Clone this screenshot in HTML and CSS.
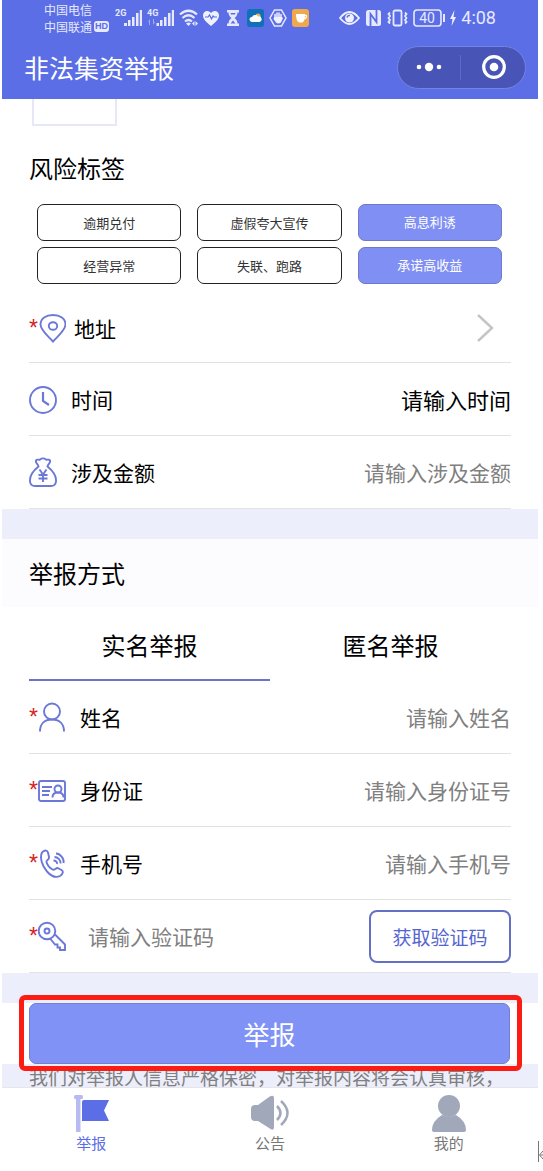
FILE: index.html
```html
<!DOCTYPE html>
<html lang="zh-CN">
<head>
<meta charset="utf-8">
<meta name="viewport" content="width=device-width, initial-scale=1">
<title>非法集资举报</title>
<link rel="stylesheet" href="styles.css">
</head>
<body>
<div class="app">
  <header class="header">
    <div class="status">
      <div class="carriers">
        <div>中国电信</div>
        <div class="carrier-hd">中国联通<span class="hd">HD</span></div>
      </div>
      <div class="status-icons">
        <svg width="27" height="20" viewBox="0 0 27 20" fill="#e6e9ff"><text class="net" x="0" y="8">2G</text><path d="M9 15h3v3H9zM13 12h2.500v6H13zM17 9h2.500v9H17zM21 5h2.500v13H21zM24.800 2H27v16h-2.200z"/></svg>
        <svg width="27" height="20" viewBox="0 0 27 20" fill="#e6e9ff"><text class="net" x="0" y="8">4G</text><path d="M9.500 15h2.500v3H9.500zM13 12h2.500v6H13zM17 9h2.500v9H17zM21 5h2.500v13H21zM24.800 2H27v16h-2.200z"/><path opacity=".5" d="M3 11l-2 3h1v3h1zM6 17l2-3H7v-3H6z"/></svg>
        <svg width="19" height="20" viewBox="0 0 19 20" fill="none" stroke="#e6e9ff" stroke-width="2.200"><path d="M1 6.500Q9.500-1 18 6.500M3.500 10Q9.500 4.500 15.500 10M6 13.500q3.500-3 7 0"/><path fill="#e6e9ff" stroke="none" d="M7 15.500q2.500-2 5 0L9.500 18zM15.500 13v5L13 15.500zM16.500 13l2.500 2.500-2.500 2.500z"/></svg>
        <svg width="16" height="20" viewBox="0 0 16 20"><path fill="#f0f1ff" d="M8 18C4 14.500 0 11.500 0 7.500 0 2.500 5.500 1.500 8 5c2.500-3.500 8-2.500 8 2.500 0 4-4 7-8 10.500z"/><path d="M2 9h3l1.500-2 2 4L10 8l1 1h3" fill="none" stroke="#5b6ee6" stroke-width="1.200"/></svg>
        <svg width="18" height="20" viewBox="0 0 18 20" fill="#e6e9ff"><path d="M3 2h12v2.500H3zM3 15.500h12V18H3zM4.500 4h9q0 4-3 6 3 2 3 6h-9q0-4 3-6-3-2-3-6z"/><path fill="#5b6ee6" d="M6.500 5h5l-.500 1.500H7zM9 12.500l2.500 3h-5z"/></svg>
        <svg width="17" height="20" viewBox="0 0 17 20"><rect y="1" width="17" height="18" rx="3" fill="#1070b8"/><circle cx="11" cy="8" r="2.500" fill="#e8b860"/><path fill="#fff" d="M5 14a2.500 2.500 0 0 1 0-5 3.500 3.500 0 0 1 6-.500A2.800 2.800 0 0 1 12.500 14z"/></svg>
        <svg width="18" height="20" viewBox="0 0 18 20"><path d="M5.500 2h7L17 10l-4.500 8h-7L1 10z" fill="none" stroke="#e6e9ff" stroke-width="1.500"/><path d="M6 11V6.500M8 10V5M10 10V5M12 11V6.500" stroke="#f0f1ff" stroke-width="1.500" stroke-linecap="round"/><path fill="#f0f1ff" d="M5.300 9h7.500l1.200 1-2 4.500q-3 2-5 0L4.500 11z"/></svg>
        <svg width="17" height="20" viewBox="0 0 17 20"><rect y="1" width="17" height="18" rx="3" fill="#eda94c"/><path fill="#fff" d="M4 6h9q0 8-3 8.500H7Q4 13 4 6z"/><path d="M12 7.500q3-.500 2.500 1.500T11.500 11" fill="none" stroke="#fff" stroke-width="1.200"/></svg>
      </div>
      <div class="status-icons status-right">
        <svg width="21" height="20" viewBox="0 0 21 20"><path d="M1 10q9.500-12 19 0-9.500 12-19 0z" fill="none" stroke="#f0f1ff" stroke-width="1.800"/><circle cx="10.500" cy="10" r="4.500" fill="#f0f1ff"/><path d="M8 9.500Q8.500 7 11 7.500" fill="none" stroke="#5b6ee6" stroke-width="1.500"/></svg>
        <svg width="17" height="20" viewBox="0 0 17 20"><rect x="1" y="2" width="15" height="16" rx="2.500" fill="#e6e9ff"/><path d="M5.500 18V6l6 8V2" fill="none" stroke="#5b6ee6" stroke-width="1.800"/></svg>
        <svg width="21" height="20" viewBox="0 0 21 20" fill="none" stroke="#e6e9ff" stroke-width="1.800"><rect x="6.500" y="2.500" width="8" height="15" rx="1.500"/><path d="M3 4.500L1.500 6 3 8 1.500 10 3 12l-1.500 2L3 15.500M18 4.500L19.500 6 18 8l1.500 2-1.500 2 1.500 2-1.500 1.500"/></svg>
        <svg width="32" height="20" viewBox="0 0 32 20"><rect x="1" y="2" width="27" height="16" rx="3" fill="none" stroke="#e6e9ff" stroke-width="1.600"/><path d="M31 6v8" stroke="#e6e9ff" stroke-width="2"/><text class="charge" x="14" y="15" text-anchor="middle" fill="#e6e9ff">40</text></svg>
        <svg width="6" height="20" viewBox="0 0 6 20"><path fill="#f0f1ff" d="M4.500 2L0 11h2.500L1.500 18 6 9H3.500z"/></svg>
        <span class="clock">4:08</span>
      </div>
    </div>
    <div class="titlebar">
      <h1 class="title">非法集资举报</h1>
      <div class="capsule">
        <button class="capsule-btn" type="button" aria-label="更多"><svg width="28" height="24" viewBox="0 0 28 24" fill="#fff"><circle cx="4" cy="12" r="2.300"/><circle cx="14" cy="12" r="4.200"/><circle cx="24" cy="12" r="2.300"/></svg></button>
        <button class="capsule-btn" type="button" aria-label="关闭"><svg width="24" height="24" viewBox="0 0 24 24"><circle cx="12" cy="12" r="10.300" fill="none" stroke="#fff" stroke-width="3.200"/><circle cx="12" cy="12" r="4.300" fill="#fff"/></svg></button>
      </div>
    </div>
  </header>

  <main>
    <div class="upload-slot"></div>
    <h2 class="heading">风险标签</h2>
    <div class="tags">
      <button class="tag" type="button" aria-pressed="false">逾期兑付</button>
      <button class="tag" type="button" aria-pressed="false">虚假夸大宣传</button>
      <button class="tag tag-on" type="button" aria-pressed="true">高息利诱</button>
      <button class="tag" type="button" aria-pressed="false">经营异常</button>
      <button class="tag" type="button" aria-pressed="false">失联、跑路</button>
      <button class="tag tag-on" type="button" aria-pressed="true">承诺高收益</button>
    </div>

    <div class="rows">
      <div class="row row-address">
        <span class="star">*</span>
        <svg class="icon" viewBox="0 0 28 28"><path d="M15 27.500C9 21 2.500 16 2.500 10.500 2.500 4.500 8 1 15 1s12.500 3.500 12.500 9.500C27.500 16 21 21 15 27.500z"/><ellipse cx="15" cy="12" rx="4.200" ry="3.800"/></svg>
        <label class="label label-near" for="address">地址</label>
        <button class="picker" id="address" type="button"><svg width="18" height="30" viewBox="0 0 18 30"><path d="M2 2l14 13L2 28" fill="none" stroke="#c4c4c4" stroke-width="2.400"/></svg></button>
      </div>
      <div class="row">
        <svg class="icon" viewBox="0 0 28 28"><circle cx="14" cy="15" r="13"/><path stroke-width="2.200" d="M14 7v9l6 4"/></svg>
        <label class="label" for="time">时间</label>
        <input class="field field-dark" id="time" type="text" placeholder="请输入时间">
      </div>
      <div class="row">
        <svg class="icon" viewBox="0 0 28 30"><path d="M9.500 9.500C9 6.500 6 6 7 3.500 8 1.500 10 3.500 11 2.500c2-1.500 4-1.500 6 0 1 1 3-1 4 1 1 2.500-2 3-2.500 6 5 4 9 9.500 8.500 15q-.500 4.500-5 4.500H6q-4.500 0-5-4.500c-.500-5.500 3.500-11 8.500-15z"/><path d="M10.500 12.500l3.500 5 3.500-5M9.500 18h9M9.500 21.500h9M14 17.500V25"/></svg>
        <label class="label" for="amount">涉及金额</label>
        <input class="field" id="amount" type="text" placeholder="请输入涉及金额">
      </div>
    </div>

    <div class="band"></div>
    <h2 class="heading heading-tinted">举报方式</h2>
    <div class="tabs" role="tablist">
      <button class="tab tab-on" type="button" role="tab" aria-selected="true">实名举报</button>
      <button class="tab" type="button" role="tab" aria-selected="false">匿名举报</button>
    </div>

    <div class="rows">
      <div class="row">
        <span class="star">*</span>
        <svg class="icon" viewBox="0 0 28 28"><circle cx="14" cy="8.500" r="8"/><path d="M2 28.500c0-8 5-12 12-12s12 4 12 12"/></svg>
        <label class="label" for="name">姓名</label>
        <input class="field" id="name" type="text" placeholder="请输入姓名">
      </div>
      <div class="row">
        <span class="star">*</span>
        <svg class="icon" viewBox="0 0 28 28"><rect x="1" y="5" width="26" height="20" rx="2"/><path d="M4 11h10M4 15h8M4 19h7"/><circle cx="20" cy="13" r="3.500"/><path d="M14.500 21.500q0-5 5.500-5t5.500 5"/></svg>
        <label class="label" for="idcard">身份证</label>
        <input class="field" id="idcard" type="text" placeholder="请输入身份证号">
      </div>
      <div class="row">
        <span class="star">*</span>
        <svg class="icon" viewBox="0 0 28 28"><path d="M4 3.500c2-2.500 5-3 6 0l1 4.500c.500 3-3 3-2.500 5 1 3.500 3.500 6 6 7.500 2 1 3-1.500 5-1.500l4 2c2.500 1.500 1 4.500-1.500 6-4 2-9 0-13-4.500-5-5.500-7.500-14-5-19z"/><path d="M18 4.500c4 0 8.500 5 7.500 9.500M16.500 8c3 0 6.500 3 6 6.500M15.500 11.500c2 0 4 1.500 3.500 3.500"/></svg>
        <label class="label" for="phone">手机号</label>
        <input class="field" id="phone" type="tel" placeholder="请输入手机号">
      </div>
      <div class="row">
        <span class="star">*</span>
        <svg class="icon" viewBox="0 0 28 28"><circle cx="9" cy="9" r="8.300"/><circle cx="9" cy="9" r="2.500"/><path d="M17 12.500l10 10v5.500h-5v-2.500h-2.500v-3H17l-4.500-5.500"/></svg>
        <input class="field field-code" type="text" placeholder="请输入验证码" aria-label="验证码">
        <button class="code-btn" type="button">获取验证码</button>
      </div>
    </div>

    <div class="band"></div>
    <div class="submit-row">
      <button class="submit" type="submit">举报</button>
      <span class="highlight"></span>
    </div>
    <p class="notice">我们对举报人信息严格保密，对举报内容将会认真审核，</p>
  </main>

  <nav class="nav">
    <a class="nav-item nav-on" href="#report">
      <svg width="38" height="38" viewBox="0 0 38 38"><rect x="2" y="1" width="9" height="4" rx="1.500" fill="#b7bbf2"/><path fill="#b7bbf2" d="M4 4h4.500v34H4z"/><path fill="#5b6ee6" d="M10 8q0-2 2-2h25l-5 10.500L37 27H10z"/></svg>
      举报
    </a>
    <a class="nav-item" href="#news">
      <svg width="38" height="38" viewBox="0 0 38 38"><path fill="#a1a8ba" d="M0 15q0-4 4-4h3L18 3q5-3 5 1v29q0 5-5 1L7 27H4q-4 0-4-4z"/><path d="M26 12q7 7 0 14M30 7q13 12 0 24" fill="none" stroke="#a1a8ba" stroke-width="2.500"/></svg>
      公告
    </a>
    <a class="nav-item" href="#me">
      <svg width="38" height="38" viewBox="0 0 38 38" fill="#a1a8ba"><circle cx="19" cy="12" r="11"/><path d="M2 36q0-9 10-15 7 3 14 0 10 6 10 15 0 2-3 2H5q-3 0-3-2z"/></svg>
      我的
    </a>
  </nav>
  <svg class="caret" width="5" height="22" viewBox="0 0 5 22" fill="none" stroke="#777"><path d="M.500 0v21M5 10L1.500 14 5 18M2 14h3"/></svg>
</div>
</body>
</html>
```
FILE: styles.css
```css
* { box-sizing: border-box; }

body {
  margin: 0;
  background: #fff;
  color: #000;
  font-family: "Noto Sans CJK SC", sans-serif;
}

button, input {
  margin: 0;
  padding: 0;
  border: 0;
  background: none;
  color: inherit;
  font-family: inherit;
}

svg { display: block; flex: none; }

.app {
  position: relative;
  display: flex;
  flex-direction: column;
  min-height: 100vh;
  padding: 0 5px 0 2px;
}

.header { background: #5b6ee6; color: #fff; }

.status {
  display: flex;
  align-items: center;
  height: 35px;
  padding: 0 42px;
  color: #e6e9ff;
}
.carriers { width: 71px; font-size: 12px; line-height: 17px; white-space: nowrap; }
.carrier-hd { display: flex; align-items: center; gap: 2px; }
.hd {
  padding: 0 1px;
  border-radius: 3px;
  background: #e6e9ff;
  color: #5b6ee6;
  font: bold 9px/11px "Liberation Sans", sans-serif;
}
.status-icons { display: flex; align-items: center; gap: 5px; }
.status-right { margin-left: auto; }
.net { font: bold 9px Roboto, sans-serif; }
.charge { font: 14px Roboto, sans-serif; }
.clock { font: 18px/20px Roboto, sans-serif; }

.titlebar {
  display: flex;
  align-items: center;
  justify-content: space-between;
  height: 64px;
  padding: 0 12px 0 22px;
}
.title { margin: 0; font-size: 25px; font-weight: 400; line-height: 36px; }
.capsule {
  display: flex;
  width: 129px;
  height: 43px;
  padding: 8px 0;
  border: 1px solid #7583e6;
  border-radius: 22px;
  background: #4854b6;
}
.capsule-btn { display: flex; flex: 1; align-items: center; justify-content: center; }
.capsule-btn + .capsule-btn { padding-left: 2px; border-left: 1px solid #5d69c6; }

.upload-slot {
  width: 85px;
  height: 27px;
  margin-left: 30px;
  border: 2px solid #e6e8f9;
  border-top: 0;
}

.heading {
  margin: 0;
  padding: 24px 27px 17px;
  font-size: 24px;
  font-weight: 400;
  line-height: 36px;
}
.heading-tinted { padding: 16px 27px; background: #fcfcfe; }

.tags {
  display: grid;
  grid-template-columns: repeat(3, 1fr);
  gap: 6px 16px;
  padding: 1px 36px 6px 35px;
}
.tag {
  height: 37px;
  padding-bottom: 1px;
  border: 1px solid #222;
  border-radius: 7px;
  color: #333;
  font-size: 13px;
}
.tag-on {
  padding-bottom: 3px;
  border-color: #7079c8;
  background: #808ff4;
  color: #fff;
}

.rows { padding: 0 27px; }
.row {
  display: flex;
  align-items: center;
  height: 73px;
  border-bottom: 1px solid #e2e2e2;
}
.row-address { padding-top: 3px; }
.star {
  width: 9px;
  color: #d81e1e;
  font: 23px/20px "Liberation Sans", sans-serif;
}
.icon {
  width: 28px;
  height: 30px;
  fill: none;
  stroke: #6b78d8;
  stroke-width: 1.900;
}
.label { padding-left: 14px; font-size: 21px; line-height: 30px; }
.label-near { padding-left: 8px; }
.picker { display: flex; flex: 1; justify-content: flex-end; padding-right: 17px; }
.field {
  flex: 1;
  min-width: 0;
  height: 36px;
  outline: 0;
  font-size: 21px;
  text-align: right;
}
.field::placeholder { color: #808080; opacity: 1; }
.field-dark { font-size: 22px; }
.field-dark::placeholder { color: #000; }
.field-code { padding-left: 22px; text-align: left; }
.code-btn {
  width: 142px;
  height: 53px;
  border: 2px solid #6470c4;
  border-radius: 8px;
  color: #5565d0;
  font-size: 19px;
}

.band { height: 30px; background: #eceefb; }

.tabs { display: flex; padding: 0 27px; }
.tab {
  flex: 1;
  height: 74px;
  padding-top: 2px;
  border-bottom: 2px solid transparent;
  font-size: 24px;
}
.tab-on { border-color: #6a76c4; }

.submit-row { position: relative; padding: 0 28px 0 27px; }
.submit {
  display: block;
  width: 100%;
  height: 61px;
  border: 1px solid #7480cc;
  border-radius: 7px;
  background: #8092f5;
  color: #fff;
  font-size: 26px;
}
.highlight {
  position: absolute;
  inset: -8px 16px -7px 17px;
  border: 5px solid #fb1d14;
  border-radius: 6px;
  pointer-events: none;
}

.notice {
  margin: 0;
  padding: 3px 27px 0;
  background: #eceefb;
  color: #808080;
  font-size: 19px;
  line-height: 20px;
}

.nav {
  display: flex;
  flex: 1;
  border-top: 1px solid #e6e6ea;
  background: #fff;
}
.nav-item {
  display: flex;
  flex: 1;
  flex-direction: column;
  align-items: center;
  padding-top: 6px;
  color: #777;
  font-size: 15px;
  line-height: 22px;
  text-decoration: none;
}
.nav-on { color: #5b6ee6; }

.caret { position: absolute; right: 0; bottom: 8px; }
```
